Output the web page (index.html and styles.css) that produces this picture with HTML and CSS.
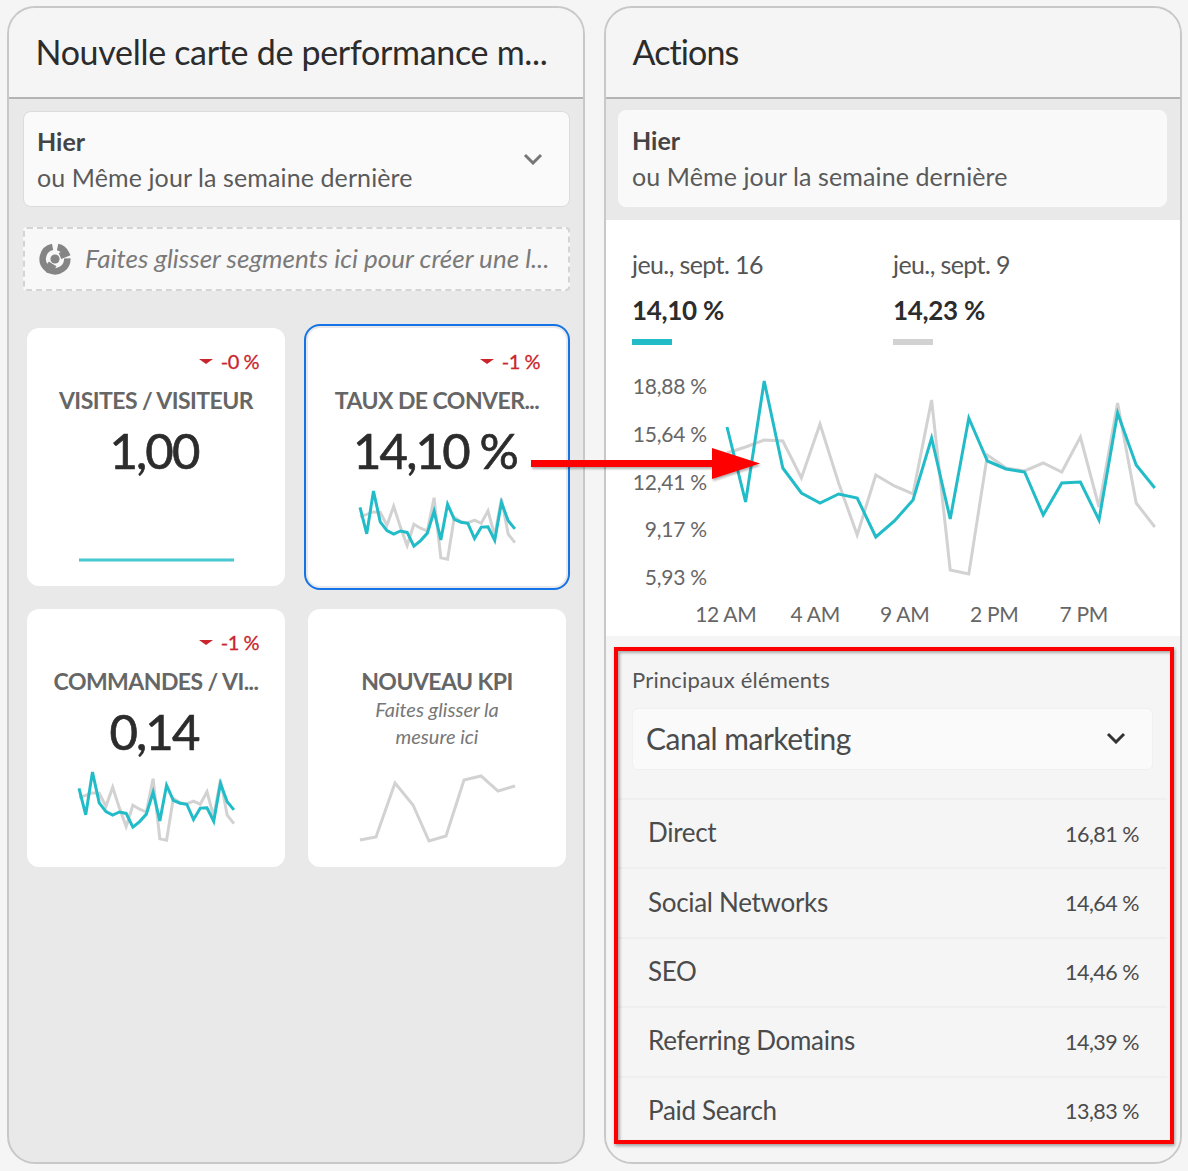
FILE: index.html
```html
<!DOCTYPE html>
<html lang="fr">
<head>
    <meta charset="UTF-8">
    <title>Nouvelle carte de performance</title>
    <link rel="stylesheet" href="styles.css">
</head>
<body>
    <!-- Shared chart lines, drawn in the big chart's own coordinates -->
    <svg class="defs" aria-hidden="true">
        <defs>
            <polyline id="line-current" class="line line-current" points="727,427 745.6,502 764.2,381 782.8,468 801.4,493 820,503 838.6,494 857.2,498 875.8,537 894.4,521 913,500 931.6,438 950.2,519 968.8,418 987.4,461 1006,469 1024.6,472 1043.2,515 1061.8,483 1080.4,482 1099,520 1117.6,413 1136.2,465 1154.8,488"/>
            <polyline id="line-previous" class="line line-previous" points="727,453 745.6,447 764.2,440 782.8,441 801.4,478 820,424 838.6,483 857.2,535 875.8,475 894.4,486 913,494 931.6,400 950.2,570 968.8,574 987.4,455 1006,468 1024.6,471 1043.2,463 1061.8,472 1080.4,437 1099,507 1117.6,403 1136.2,503 1154.8,527"/>
        </defs>
    </svg>

    <div class="page">
        <!-- Scorecard panel -->
        <section class="panel">
            <header class="panel-head">
                <h1>Nouvelle carte de performance m...</h1>
            </header>
            <div class="panel-body">
                <div class="date-select">
                    <div>
                        <div class="date-main">Hier</div>
                        <div class="date-sub">ou Même jour la semaine dernière</div>
                    </div>
                    <svg class="chevron" viewBox="0 0 20 12"><path d="M2 2l8 8 8-8"/></svg>
                </div>

                <div class="drop-zone">
                    <svg class="segment-icon" viewBox="0 0 32 32">
                        <circle class="segment-dot" cx="16" cy="16" r="4.6"/>
                        <path class="segment-arc" d="M13.6 3.9A12.3 12.3 0 0 0 8.6 25.8L12.6 20.4"/>
                        <path class="segment-arc" d="M18.6 4A12.3 12.3 0 0 1 27 10.5L21 13"/>
                        <path class="segment-arc" d="M28.3 15.4A12.3 12.3 0 0 1 11.6 27.5L14.4 21.6"/>
                    </svg>
                    <span>Faites glisser segments ici pour créer une l...</span>
                </div>

                <div class="cards">
                    <div class="card">
                        <div class="delta"><i class="arrow-down"></i>-0 %</div>
                        <div class="card-title">VISITES / VISITEUR</div>
                        <div class="card-value">1,00</div>
                        <svg class="spark" viewBox="0 0 155 70"><line class="flat-line" x1="0" y1="70" x2="155" y2="70"/></svg>
                    </div>
                    <div class="card card-selected">
                        <div class="delta"><i class="arrow-down"></i>-1 %</div>
                        <div class="card-title">TAUX DE CONVER...</div>
                        <div class="card-value">14,10 %</div>
                        <svg class="spark" viewBox="727 378 428 198" preserveAspectRatio="none">
                            <use href="#line-previous"/>
                            <use href="#line-current"/>
                        </svg>
                    </div>
                    <div class="card">
                        <div class="delta"><i class="arrow-down"></i>-1 %</div>
                        <div class="card-title">COMMANDES / VI...</div>
                        <div class="card-value">0,14</div>
                        <svg class="spark" viewBox="727 378 428 198" preserveAspectRatio="none">
                            <use href="#line-previous"/>
                            <use href="#line-current"/>
                        </svg>
                    </div>
                    <div class="card card-empty">
                        <div class="card-title">NOUVEAU KPI</div>
                        <div class="card-hint">Faites glisser la<br>mesure ici</div>
                        <svg class="spark" viewBox="0 0 155 70">
                            <polyline class="line line-previous" points="0,62 16,59 35,5 53,27 69,63 86,58 104,2 121,-2 138,13 155,8"/>
                        </svg>
                    </div>
                </div>
            </div>
        </section>

        <!-- Actions panel -->
        <section class="panel">
            <header class="panel-head">
                <h1 class="title-tight">Actions</h1>
            </header>
            <div class="panel-body panel-body-plain">
                <div class="date-band">
                    <div class="date-select date-select-flat">
                        <div>
                            <div class="date-main">Hier</div>
                            <div class="date-sub">ou Même jour la semaine dernière</div>
                        </div>
                    </div>
                </div>

                <div class="detail">
                    <div class="legend">
                        <div class="legend-item">
                            <div class="legend-date">jeu., sept. 16</div>
                            <div class="legend-value">14,10 %</div>
                            <div class="legend-bar"></div>
                        </div>
                        <div class="legend-item">
                            <div class="legend-date">jeu., sept. 9</div>
                            <div class="legend-value">14,23 %</div>
                            <div class="legend-bar legend-bar-previous"></div>
                        </div>
                    </div>
                    <div class="chart">
                        <div class="y-axis">
                            <span>18,88 %</span>
                            <span>15,64 %</span>
                            <span>12,41 %</span>
                            <span>9,17 %</span>
                            <span>5,93 %</span>
                        </div>
                        <svg class="chart-lines" viewBox="720 375 442 205">
                            <use href="#line-previous"/>
                            <use href="#line-current"/>
                        </svg>
                    </div>
                    <div class="x-axis">
                        <span>12 AM</span>
                        <span>4 AM</span>
                        <span>9 AM</span>
                        <span>2 PM</span>
                        <span>7 PM</span>
                    </div>
                </div>

                <div class="top-items">
                    <div class="top-label">Principaux éléments</div>
                    <div class="dim-select">
                        <span>Canal marketing</span>
                        <svg class="chevron chevron-dark" viewBox="0 0 20 12"><path d="M2 2l8 8 8-8"/></svg>
                    </div>
                    <ul class="item-list">
                        <li><span>Direct</span><span class="item-value">16,81 %</span></li>
                        <li><span>Social Networks</span><span class="item-value">14,64 %</span></li>
                        <li><span>SEO</span><span class="item-value">14,46 %</span></li>
                        <li><span>Referring Domains</span><span class="item-value">14,39 %</span></li>
                        <li><span>Paid Search</span><span class="item-value">13,83 %</span></li>
                    </ul>
                </div>
            </div>
        </section>
    </div>

    <!-- Annotations laid over the screenshot -->
    <div class="note-box"></div>
    <svg class="note-arrow" viewBox="0 0 229 36">
        <path d="M0 14H181V2L229 17.5L181 33V21H0Z"/>
    </svg>
</body>
</html>
```

FILE: styles.css
```css
* {
    box-sizing: border-box;
}
html, body {
    margin: 0;
    padding: 0;
}
body {
    position: relative;
    width: 1188px;
    height: 1171px;
    overflow: hidden;
    background-color: #f5f5f5;
    font-family: "Lato", "Liberation Sans", sans-serif;
    color: #4b4b4b;
}
.defs {
    position: absolute;
    width: 0;
    height: 0;
}
.page {
    display: flex;
    gap: 19px;
    padding: 6px 6px 7px 7px;
    height: 100%;
}
.panel {
    flex: 1;
    display: flex;
    flex-direction: column;
    overflow: hidden;
    border: 2px solid #c8c8c8;
    border-radius: 28px;
    background-color: #e9e9e9;
}
.panel-head {
    flex: none;
    height: 91px;
    padding: 0 26px 3px 26.5px;
    display: flex;
    align-items: center;
    background-color: #f5f5f5;
    border-bottom: 2px solid #b4b4b4;
}
.panel-head h1 {
    margin: 0;
    font-size: 34px;
    font-weight: 400;
    letter-spacing: -0.3px;
    color: #2c2c2c;
    white-space: nowrap;
}
.panel-head .title-tight {
    letter-spacing: -0.9px;
}
.panel-body {
    flex: 1;
    padding: 12px 13px 0 14px;
}
.panel-body-plain {
    padding: 0;
    background-color: #f5f5f5;
    display: flex;
    flex-direction: column;
}

/* Date range selector */
.date-select {
    height: 96px;
    padding: 0 26px 0 13px;
    display: flex;
    align-items: center;
    justify-content: space-between;
    background-color: #fafafa;
    border: 1px solid #dcdcdc;
    border-radius: 8px;
}
.date-select-flat {
    height: 97px;
    padding-bottom: 2px;
    border-color: #fafafa;
}
.date-main {
    font-size: 25px;
    font-weight: 700;
    line-height: 36px;
    color: #444;
}
.date-sub {
    font-size: 25px;
    line-height: 36px;
    color: #5a5a5a;
    letter-spacing: 0.1px;
}
.chevron {
    width: 20px;
    height: 12px;
    fill: none;
    stroke: #777;
    stroke-width: 3;
}
.chevron-dark {
    stroke: #333;
}

/* Segment drop zone */
.drop-zone {
    height: 64px;
    margin-top: 20px;
    padding: 0 14px 3px;
    display: flex;
    align-items: center;
    gap: 14px;
    background-color: #f8f8f8;
    border: 2px dashed #d4d4d4;
    border-radius: 4px;
    font-size: 26px;
    font-style: italic;
    color: #7a7a7a;
    white-space: nowrap;
}
.segment-icon {
    flex: none;
    width: 32px;
    height: 32px;
    margin-top: 3px;
}
.segment-dot {
    fill: #858585;
}
.segment-arc {
    fill: none;
    stroke: #858585;
    stroke-width: 6.5;
}

/* KPI cards */
.cards {
    display: grid;
    grid-template-columns: 258px 258px;
    grid-auto-rows: 258px;
    gap: 23px;
    margin: 37px 0 0 4px;
}
.card {
    display: flex;
    flex-direction: column;
    align-items: center;
    padding: 22px 26px 0;
    background-color: #fff;
    border-radius: 12px;
}
.card-selected {
    outline: 2px solid #1473e6;
    outline-offset: 2px;
}
.delta {
    align-self: flex-end;
    height: 22px;
    display: flex;
    align-items: center;
    font-size: 20px;
    letter-spacing: -0.5px;
    color: #c9252d;
    -webkit-text-stroke: 0.3px #c9252d;
}
.arrow-down {
    width: 0;
    height: 0;
    margin-right: 8px;
    border-left: 7px solid transparent;
    border-right: 7px solid transparent;
    border-top: 5px solid #c9252d;
}
.card-title {
    margin-top: 13px;
    font-size: 23px;
    line-height: 30px;
    font-weight: 700;
    color: #666;
    letter-spacing: -0.55px;
    white-space: nowrap;
}
.card-value {
    height: 62px;
    margin: 4px 4px 0 0;
    font-size: 49px;
    line-height: 62px;
    letter-spacing: -1.8px;
    color: #2c2c2c;
    -webkit-text-stroke: 0.7px #2c2c2c;
    white-space: nowrap;
}
.card-empty {
    padding-top: 44px;
}
.card-hint {
    font-size: 20px;
    line-height: 27px;
    font-style: italic;
    text-align: center;
    color: #777;
}
.spark {
    display: block;
    flex: none;
    width: 155px;
    height: 70px;
    margin-top: 9px;
    overflow: visible;
}
.card-empty .spark {
    margin-top: 28px;
    stroke-width: 3;
}
.flat-line {
    stroke: #45c8cf;
    stroke-width: 3;
}

/* Chart lines */
.line {
    fill: none;
    stroke-linejoin: miter;
    vector-effect: non-scaling-stroke;
}
.line-current {
    stroke: #22bcc8;
}
.line-previous {
    stroke: #d2d2d2;
}
use {
    stroke-width: 3;
}

/* Actions panel */
.date-band {
    flex: none;
    padding: 11px 13px 13px 12px;
    background-color: #e9e9e9;
}
.date-band .date-select {
    background-color: #f9f9f9;
}
.detail {
    flex: none;
    height: 416px;
    padding: 26px 26px 0;
    background-color: #fff;
}
.legend {
    display: flex;
}
.legend-item {
    width: 261px;
}
.legend-date {
    font-size: 25px;
    line-height: 36px;
    color: #555;
    letter-spacing: -0.6px;
}
.legend-value {
    margin-top: 10px;
    font-size: 26px;
    line-height: 36px;
    font-weight: 700;
    letter-spacing: -0.3px;
    color: #2c2c2c;
}
.legend-bar {
    width: 40px;
    height: 6px;
    margin-top: 11px;
    background-color: #22bcc8;
}
.legend-bar-previous {
    background-color: #d2d2d2;
}
.chart {
    display: flex;
    height: 205px;
    margin-top: 30px;
}
.y-axis {
    flex: none;
    width: 75px;
    height: 217px;
    margin-top: -2px;
    display: flex;
    flex-direction: column;
    justify-content: space-between;
    align-items: flex-end;
    font-size: 21px;
    line-height: 26px;
    letter-spacing: -0.2px;
    color: #666;
    white-space: nowrap;
}
.chart-lines {
    display: block;
    margin-left: 13px;
    width: 442px;
    height: 205px;
    flex: none;
}
.x-axis {
    display: grid;
    grid-template-columns: repeat(5, 89.5px);
    margin: 21px 0 0 49px;
    font-size: 21px;
    line-height: 26px;
    letter-spacing: -0.3px;
    text-align: center;
    color: #666;
}

/* Top items list */
.top-items {
    flex: 1;
    padding: 29px 13px 0 12px;
}
.top-label {
    padding: 0 14px;
    font-size: 22px;
    line-height: 30px;
    letter-spacing: 0.2px;
    color: #555;
}
.dim-select {
    height: 62px;
    margin: 13px 14px 0 14px;
    padding: 0 26px 2px 13px;
    display: flex;
    align-items: center;
    justify-content: space-between;
    background-color: #fafafa;
    border: 1px solid #f0f0f0;
    border-radius: 6px;
    font-size: 30px;
    letter-spacing: -0.5px;
    color: #4b4b4b;
}
.item-list {
    margin: 28px 0 0;
    padding: 0;
    list-style: none;
}
.item-list li {
    height: 69.4px;
    padding: 0 28px 3px 30px;
    display: flex;
    align-items: center;
    justify-content: space-between;
    border-top: 2px solid #efefef;
    font-size: 26px;
    letter-spacing: -0.3px;
    color: #4b4b4b;
}
.item-value {
    margin-top: 3px;
    font-size: 21.5px;
    letter-spacing: -0.5px;
}

/* Red annotations */
.note-box {
    position: absolute;
    left: 614px;
    top: 647px;
    width: 560px;
    height: 497px;
    border: 4px solid #f00;
    box-shadow: 1px 2px 3px rgba(0, 0, 0, 0.35), inset 2px 2px 3px rgba(0, 0, 0, 0.3);
}
.note-arrow {
    position: absolute;
    left: 531px;
    top: 446px;
    width: 229px;
    height: 36px;
    fill: #f00;
    filter: drop-shadow(1px 2px 1px rgba(0, 0, 0, 0.3));
}
```
